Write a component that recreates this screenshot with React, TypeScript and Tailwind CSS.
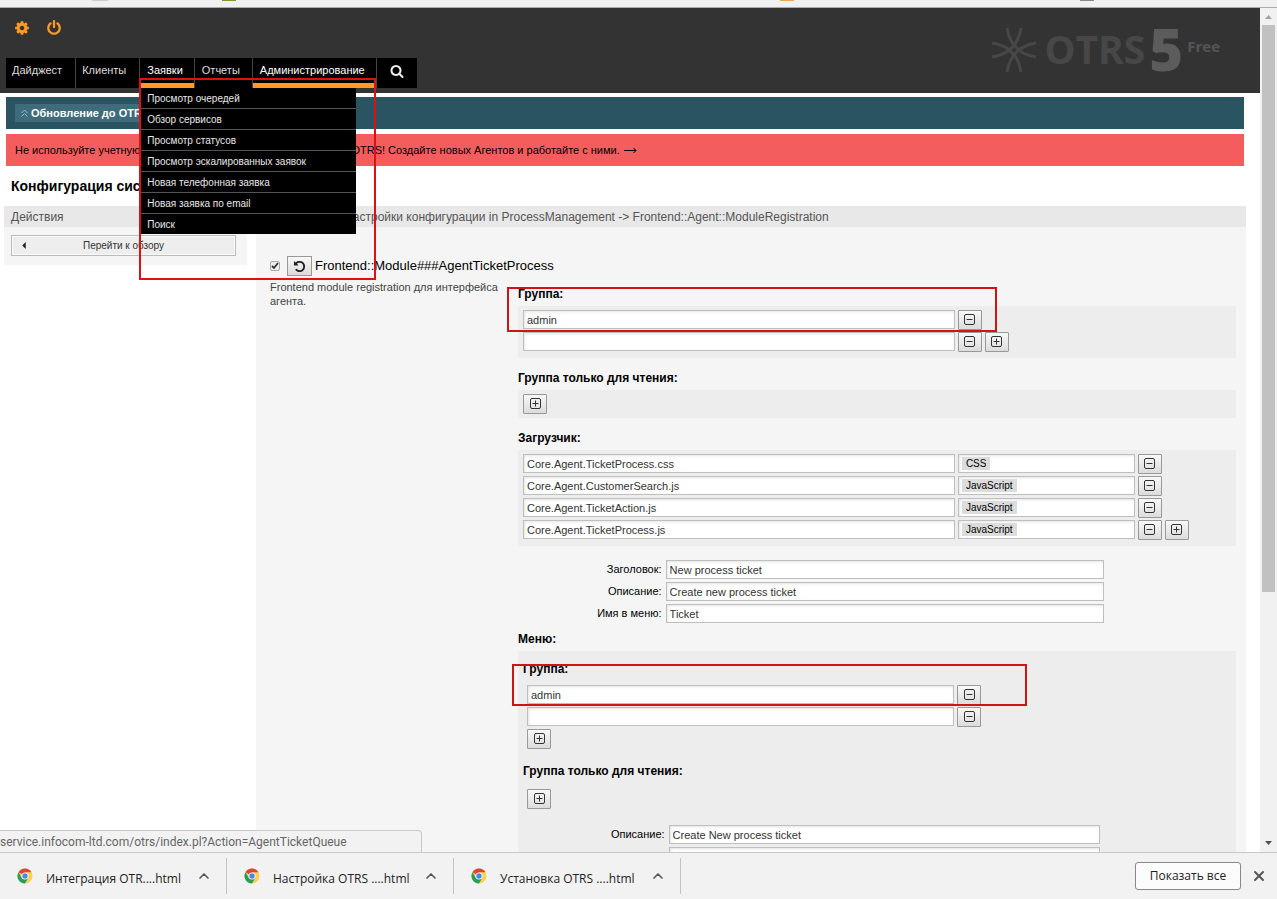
import type { ReactNode } from 'react';
import { ChevronUp, X } from 'lucide-react';

const MENU_ITEMS = [
  'Просмотр очередей',
  'Обзор сервисов',
  'Просмотр статусов',
  'Просмотр эскалированных заявок',
  'Новая телефонная заявка',
  'Новая заявка по email',
  'Поиск',
];

const LOADER_FILES = [
  { file: 'Core.Agent.TicketProcess.css', type: 'CSS' },
  { file: 'Core.Agent.CustomerSearch.js', type: 'JavaScript' },
  { file: 'Core.Agent.TicketAction.js', type: 'JavaScript' },
  { file: 'Core.Agent.TicketProcess.js', type: 'JavaScript' },
];

const FIELDS = [
  { id: 'title', label: 'Заголовок:', value: 'New process ticket' },
  { id: 'description', label: 'Описание:', value: 'Create new process ticket' },
  { id: 'navbar', label: 'Имя в меню:', value: 'Ticket' },
];

const DOWNLOADS = ['Интеграция OTR....html', 'Настройка OTRS ....html', 'Установка OTRS ....html'];

const COG =
  'M1152 896q0-106-75-181t-181-75-181 75-75 181 75 181 181 75 181-75 75-181zm512-109v222q0 12-8 23t-20 13l-185 28q-19 54-39 91 35 50 107 138 10 12 10 25t-9 23q-27 37-99 108t-94 71q-12 0-26-9l-138-108q-44 23-91 38-16 136-29 186-7 28-36 28h-222q-14 0-24.5-8.5t-11.5-21.5l-28-184q-49-16-90-37l-141 107q-10 9-25 9-14 0-25-11-126-114-165-168-7-10-7-23 0-12 8-23 15-21 51-66.5t54-70.5q-27-50-41-99l-183-27q-13-2-21-12.5t-8-23.5v-222q0-12 8-23t19-13l186-28q14-46 39-92-40-57-107-138-10-12-10-24 0-10 9-23 26-36 98.5-107.5t94.5-71.5q13 0 26 10l138 107q44-23 91-38 16-136 29-186 7-28 36-28h222q14 0 24.5 8.5t11.5 21.5l28 184q49 16 90 37l142-107q9-9 24-9 13 0 25 10 129 119 165 170 7 8 7 22 0 12-8 23-15 21-51 66.5t-54 70.5q26 50 41 98l183 28q13 2 21 12.5t8 23.5z';
const POWER =
  'M1664 896q0 156-61 298t-164 245-245 164-298 61-298-61-245-164-164-245-61-298q0-182 80.5-343t226.5-270q43-32 95.5-25t83.5 50q32 42 24.5 94.5t-49.5 84.5q-98 74-151.5 181t-53.5 228q0 104 40.5 198.5t109.5 163.5 163.5 109.5 198.5 40.5 198.5-40.5 163.5-109.5 109.5-163.5 40.5-198.5q0-121-53.5-228t-151.5-181q-42-32-49.5-84.5t24.5-94.5q31-43 84-50t95 25q146 109 226.5 270t80.5 343zm-640-768v640q0 52-38 90t-90 38-90-38-38-90v-640q0-52 38-90t90-38 90 38 38 90z';
const SEARCH =
  'M1216 832q0-185-131.5-316.5t-316.5-131.5-316.5 131.5-131.5 316.5 131.5 316.5 316.5 131.5 316.5-131.5 131.5-316.5zm512 832q0 52-38 90t-90 38q-54 0-90-38l-343-342q-179 124-399 124-143 0-273.5-55.5t-225-150-150-225-55.5-273.5 55.5-273.5 150-225 225-150 273.5-55.5 273.5 55.5 225 150 150 225 55.5 273.5q0 220-124 399l343 343q37 37 37 90z';
const UNDO =
  'M1664 896q0 156-61 298t-164 245-245 164-298 61q-172 0-327-72.5t-264-204.5q-7-10-6.5-22.5t8.5-20.5l137-138q10-9 25-9 16 2 23 12 73 95 179 147t225 52q104 0 198.5-40.5t163.5-109.5 109.5-163.5 40.5-198.5-40.5-198.5-109.5-163.5-163.5-109.5-198.5-40.5q-98 0-188 35.5t-160 101.5l137 138q31 30 14 69-17 40-59 40h-448q-26 0-45-19t-19-45v-448q0-42 40-59 39-17 69 14l130 129q107-101 244.5-156.5t284.5-55.5q156 0 298 61t245 164 164 245 61 298z';

const Glyph = ({ d, className }: { d: string; className: string }) => (
  <svg viewBox="0 0 1792 1792" fill="currentColor" className={className} aria-hidden="true">
    <path d={d} />
  </svg>
);

const SquareButton = ({ kind }: { kind: 'plus' | 'minus' }) => (
  <button
    type="button"
    aria-label={kind === 'plus' ? 'Добавить' : 'Удалить'}
    className="flex h-5 w-6 shrink-0 items-center justify-center self-end rounded-[1px] border border-[#999] bg-linear-to-b from-[#f8f8f8] to-[#dcdcdc] pb-px"
  >
    <svg viewBox="0 0 11 11" className="size-[11px]" fill="none" stroke="#333" aria-hidden="true">
      <rect x="0.5" y="0.5" width="10" height="10" rx="1.5" />
      <path d={kind === 'plus' ? 'M2.5 5.5h6M5.5 2.5v6' : 'M2.5 5.5h6'} />
    </svg>
  </button>
);

const TextField = ({ id, label, value, className }: { id?: string; label?: string; value: string; className: string }) => (
  <input
    id={id}
    type="text"
    aria-label={label}
    defaultValue={value}
    className={`h-[19px] border border-[#bfbfbf] bg-white px-[3px] text-[11px] text-[#333] shadow-[inset_1px_1px_3px_#e4e4e4] outline-none ${className}`}
  />
);

const Group = ({ title, children }: { title: string; children: ReactNode }) => (
  <section>
    <h3 className="flex h-6 items-center text-xs font-bold text-black">{title}</h3>
    <div className="flex flex-col gap-0.5 bg-[#ededed] px-[5px] py-1">{children}</div>
  </section>
);

const LabeledField = ({ id, label, value }: { id: string; label: string; value: string }) => (
  <div className="flex h-5 items-start gap-1">
    <label htmlFor={id} className="w-1/5 text-right text-[11px] leading-[19px] text-black">
      {label}
    </label>
    <TextField id={id} value={value} className="w-[61%]" />
  </div>
);

const Logo = () => (
  <div className="flex items-start pt-3 pr-10 font-['Open_Sans',sans-serif] font-bold text-[#474747]">
    <svg viewBox="-2 -2 48 48" className="mt-1.5 mr-1.5 size-12" fill="none" stroke="#474747" strokeWidth="3" aria-hidden="true">
      <path d="M15 0Q19 25 44 29M29 0Q25 25 0 29M0 15Q25 19 29 44M44 15Q19 19 15 44" />
    </svg>
    <span className="mt-[7px] text-[39px] leading-[44px]">OTRS</span>
    <span className="ml-1 text-[58px] leading-[58px] font-extrabold text-[#5c5c5c]">5</span>
    <span className="mt-4 ml-1 text-[15px] leading-5 text-[#555]">Free</span>
  </div>
);

const Header = () => (
  <header className="flex h-[85px] shrink-0 justify-between bg-[#333]">
    <div className="flex flex-col justify-between pt-3 pb-[5px] pl-1.5">
      <div className="flex gap-4 pl-2 text-[#ff9b24]">
        <button type="button" aria-label="Настройки">
          <Glyph d={COG} className="size-4" />
        </button>
        <button type="button" aria-label="Выход">
          <Glyph d={POWER} className="size-4" />
        </button>
      </div>
      <nav>
        <ul className="flex h-[30px] bg-black text-[11px] text-[#ddd]">
          <li className="border-r border-[#444]">
            <a href="#" className="flex h-[25px] items-center pr-[13px] pl-1.5">Дайджест</a>
          </li>
          <li className="border-r border-[#444]">
            <a href="#" className="flex h-[25px] items-center pr-[13px] pl-1.5">Клиенты</a>
          </li>
          <li className="relative border-r border-[#444]">
            <a href="#" className="flex h-[30px] items-center border-b-[5px] border-[#ff9b24] pr-[11px] pl-[7px] font-medium text-white">
              Заявки
            </a>
            <ul className="absolute top-[30px] left-px z-10 w-[215px] bg-black text-[10px] text-[#e8e8e8]">
              {MENU_ITEMS.map((item) => (
                <li key={item} className="border-b border-[#555] last:border-b-0">
                  <a href="#" className="flex h-5 items-center pl-1.5">{item}</a>
                </li>
              ))}
            </ul>
            <div className="pointer-events-none absolute top-5 -left-px z-20 h-[202px] w-[237px] border-2 border-[#dc1111]" />
          </li>
          <li className="border-r border-[#444]">
            <a href="#" className="flex h-[25px] items-center pr-3 pl-[7px]">Отчеты</a>
          </li>
          <li className="border-r border-[#444]">
            <a href="#" className="flex h-[30px] items-center border-b-[5px] border-[#ff9b24] pr-[11px] pl-[7px] font-medium text-white">
              Администрирование
            </a>
          </li>
          <li>
            <button type="button" aria-label="Поиск" className="flex h-[25px] w-10 items-center justify-center text-[#eee]">
              <Glyph d={SEARCH} className="size-3.5" />
            </button>
          </li>
        </ul>
      </nav>
    </div>
    <Logo />
  </header>
);

const Sidebar = () => (
  <aside className="w-[243px] shrink-0 self-start bg-[#f5f5f5]">
    <h2 className="flex h-[21px] items-center bg-[#e8e8e8] pl-[7px] text-xs text-[#555]">Действия</h2>
    <div className="pt-2 pr-[11px] pb-[9px] pl-[7px]">
      <a
        href="#"
        className="relative flex h-[21px] items-center justify-center border border-[#bbb] bg-[#eee] text-[10px] text-[#333] shadow-[inset_0_0_0_1px_#fafafa]"
      >
        <svg viewBox="0 0 4 8" className="absolute left-2.5 h-[7px] w-1" aria-hidden="true">
          <path d="M4 0v8L0 4z" fill="#222" />
        </svg>
        Перейти к обзору
      </a>
    </div>
  </aside>
);

const SettingForm = () => (
  <main className="min-w-0 flex-1 bg-[#f5f5f5]">
    <h2 className="flex h-[21px] items-center bg-[#e8e8e8] pl-1 text-xs text-[#555]">
      Редактировать настройки конфигурации in ProcessManagement -&gt; Frontend::Agent::ModuleRegistration
    </h2>
    <div className="mt-[29px] flex h-5 items-center pl-[14px]">
      <input
        id="setting"
        type="checkbox"
        defaultChecked
        className="mr-[7px] size-2.5 appearance-none rounded-[2px] border border-[#aaa] bg-[#eee] bg-[url('data:image/svg+xml,%3Csvg%20xmlns=%22http://www.w3.org/2000/svg%22%20viewBox=%220%200%208%208%22%3E%3Cpath%20d=%22M1%204l2%202%204-5%22%20fill=%22none%22%20stroke=%22%23333%22%20stroke-width=%221.8%22/%3E%3C/svg%3E')]"
      />
      <button
        type="button"
        aria-label="Сбросить"
        className="flex h-5 w-[25px] items-center justify-center border border-[#999] bg-linear-to-b from-[#f8f8f8] to-[#dcdcdc] text-[#222]"
      >
        <Glyph d={UNDO} className="size-[13px]" />
      </button>
      <label htmlFor="setting" className="ml-[3px] text-[13px] text-black">
        Frontend::Module###AgentTicketProcess
      </label>
    </div>
    <div className="flex">
      <p className="w-[262px] shrink-0 pt-1 pr-4 pl-[14px] text-[11px] leading-[14px] text-[#444]">
        Frontend module registration для интерфейса агента.
      </p>
      <div className="flex min-w-0 flex-1 flex-col gap-2 pt-1.5 pr-2.5">
        <div className="relative">
          <Group title="Группа:">
            <div className="flex h-5 gap-[3px]">
              <TextField label="Группа 1" value="admin" className="w-[61%]" />
              <SquareButton kind="minus" />
            </div>
            <div className="mb-0.5 flex h-5 gap-[3px]">
              <TextField label="Группа 2" value="" className="w-[61%]" />
              <SquareButton kind="minus" />
              <SquareButton kind="plus" />
            </div>
          </Group>
          <div className="pointer-events-none absolute top-[5px] -left-[11px] h-[45px] w-[490px] border-2 border-[#d01414]" />
        </div>

        <Group title="Группа только для чтения:">
          <div className="flex h-5">
            <SquareButton kind="plus" />
          </div>
        </Group>

        <Group title="Загрузчик:">
          {LOADER_FILES.map(({ file, type }, i) => (
            <div key={file} className="flex h-5 gap-[3px] last:mb-0.5">
              <TextField label={`Файл ${i + 1}`} value={file} className="w-[61%]" />
              <div className="flex h-[19px] w-1/4 items-center border border-[#bfbfbf] bg-white pl-[3px] shadow-[inset_1px_1px_3px_#e4e4e4]">
                <select
                  aria-label={`Тип файла ${i + 1}`}
                  defaultValue={type}
                  className="field-sizing-content h-[13px] appearance-none bg-[#dcdcdc] px-1 text-[10px] leading-[13px] text-black outline-none"
                >
                  <option>CSS</option>
                  <option>JavaScript</option>
                </select>
              </div>
              <SquareButton kind="minus" />
              {i === LOADER_FILES.length - 1 && <SquareButton kind="plus" />}
            </div>
          ))}
        </Group>

        <div className="mt-1.5 flex flex-col gap-0.5">
          {FIELDS.map((field) => (
            <LabeledField key={field.id} {...field} />
          ))}
        </div>

        <div className="-mt-[5px]">
          <Group title="Меню:">
            <div className="relative">
              <h4 className="mt-0.5 flex h-6 items-center text-xs font-bold text-black">Группа:</h4>
              <div className="flex flex-col gap-0.5 px-1 pt-1">
                <div className="flex h-5 gap-[3px]">
                  <TextField label="Группа меню 1" value="admin" className="w-[61%]" />
                  <SquareButton kind="minus" />
                </div>
                <div className="flex h-5 gap-[3px]">
                  <TextField label="Группа меню 2" value="" className="w-[61%]" />
                  <SquareButton kind="minus" />
                </div>
                <div className="flex h-5">
                  <SquareButton kind="plus" />
                </div>
              </div>
              <div className="pointer-events-none absolute top-[9px] -left-[11px] h-[42px] w-[515px] border-2 border-[#d01414]" />
            </div>
            <h4 className="mt-2 flex h-6 items-center text-xs font-bold text-black">Группа только для чтения:</h4>
            <div className="mt-1 mb-3.5 flex h-5 px-1">
              <SquareButton kind="plus" />
            </div>
            <LabeledField id="menu-description" label="Описание:" value="Create New process ticket" />
            <LabeledField id="menu-name" label="" value="" />
          </Group>
        </div>
      </div>
    </div>
  </main>
);

const ScrollBar = () => (
  <div className="flex w-[17px] shrink-0 flex-col items-center bg-[#f1f1f1]" aria-hidden="true">
    <svg viewBox="0 0 17 17" className="size-[17px]">
      <path d="M5 11h7L8.500 7z" fill="#a3a3a3" />
    </svg>
    <div className="w-full flex-1 px-0.5">
      <div className="h-[70%] bg-[#c1c1c1]" />
    </div>
    <svg viewBox="0 0 17 17" className="size-[17px]">
      <path d="M5 6h7L8.500 10z" fill="#505050" />
    </svg>
  </div>
);

const ChromeIcon = () => (
  <svg viewBox="0 0 16 16" className="size-4" aria-hidden="true">
    <circle cx="8" cy="8" r="7.500" fill="#fdd24f" />
    <path d="M8 8L1.500 4.250A7.500 7.500 0 0 1 14.500 4.250H8z" fill="#d9473c" />
    <path d="M1.500 4.250A7.500 7.500 0 0 0 8 15.500L11.200 9.900 8 8 4.800 9.900z" fill="#26a059" />
    <circle cx="8" cy="8" r="3.500" fill="#fff" />
    <circle cx="8" cy="8" r="2.700" fill="#4f86ec" />
  </svg>
);

const DownloadShelf = () => (
  <footer className="flex h-[47px] shrink-0 items-center border-t border-[#c8c8c8] bg-[#f2f2f2] font-['Open_Sans','Noto_Sans',sans-serif] text-xs text-[#222]">
    {DOWNLOADS.map((name) => (
      <div key={name} className="flex h-9 w-[227px] items-center border-r border-[#c4c4c4] pl-[17px]">
        <ChromeIcon />
        <a href="#" className="mt-1.5 ml-[13px] w-[142px] whitespace-nowrap">{name}</a>
        <button type="button" aria-label="Параметры файла" className="ml-2">
          <ChevronUp className="size-4 text-[#555]" strokeWidth={2.5} />
        </button>
      </div>
    ))}
    <button type="button" className="ml-auto h-7 w-[106px] rounded-[3px] border border-[#888] bg-[#fcfcfc]">
      Показать все
    </button>
    <button type="button" aria-label="Закрыть" className="mr-2.5 ml-2.5">
      <X className="size-4 text-[#555]" strokeWidth={3} />
    </button>
  </footer>
);

const App = () => (
  <div className="flex h-screen flex-col overflow-hidden bg-white font-['Liberation_Sans',Arial,sans-serif]">
    <div className="flex h-2 shrink-0 items-start border-b border-[#aaa] bg-[#f0f0f0]" aria-hidden="true">
      <span className="ml-[92px] h-px w-4 bg-[#ccc]" />
      <span className="ml-[114px] h-px w-3.5 bg-[#7d9a2e]" />
      <span className="ml-auto h-px w-3.5 bg-[#e0a860]" />
      <span className="mr-[183px] ml-[286px] h-px w-3.5 bg-[#888]" />
    </div>
    <div className="flex min-h-0 flex-1">
      <div className="relative flex min-w-0 flex-1 flex-col overflow-hidden">
        <Header />
        <div className="mt-1 mr-4 ml-1.5 flex h-8 shrink-0 items-center bg-[#2b5463] pl-[9px]">
          <a href="#" className="flex h-[18px] items-center gap-[3px] bg-[#3f6b7b] px-1.5 text-[11px] font-bold text-white">
            <svg viewBox="0 0 7 8" className="h-2 w-[7px]" fill="none" stroke="#7fc4d4" aria-hidden="true">
              <path d="M0.500 4l3-3 3 3M0.500 7.500l3-3 3 3" />
            </svg>
            Обновление до OTRS Business Solution™
          </a>
        </div>
        <div className="mt-[5px] mr-4 ml-1.5 flex h-8 shrink-0 items-center bg-[#f45d5d] pl-[9px] text-[11px] text-black">
          <a href="#" className="flex items-center gap-1">
            Не используйте учетную запись суперпользователя при работе в OTRS! Создайте новых Агентов и работайте с ними.
            <svg viewBox="0 0 13 7" className="h-[7px] w-[13px]" fill="none" stroke="#000" aria-hidden="true">
              <path d="M0 3.500h12M9.500 1l2.500 2.500L9.500 6" />
            </svg>
          </a>
        </div>
        <h1 className="flex h-10 shrink-0 items-center pl-[7px] ml-1 text-sm font-bold text-black">Конфигурация системы</h1>
        <div className="flex gap-[9px] pr-3.5 pl-1">
          <Sidebar />
          <SettingForm />
        </div>
        <div className="absolute bottom-0 left-0 h-[22px] w-[422px] rounded-tr border border-b-0 border-l-0 border-[#c8c8c8] bg-[#f2f2f2] font-[Roboto,'Noto_Sans',sans-serif] text-xs leading-[22px] text-[#666]">
          service.infocom-ltd.com/otrs/index.pl?Action=AgentTicketQueue
        </div>
      </div>
      <ScrollBar />
    </div>
    <DownloadShelf />
  </div>
);

export default App;
